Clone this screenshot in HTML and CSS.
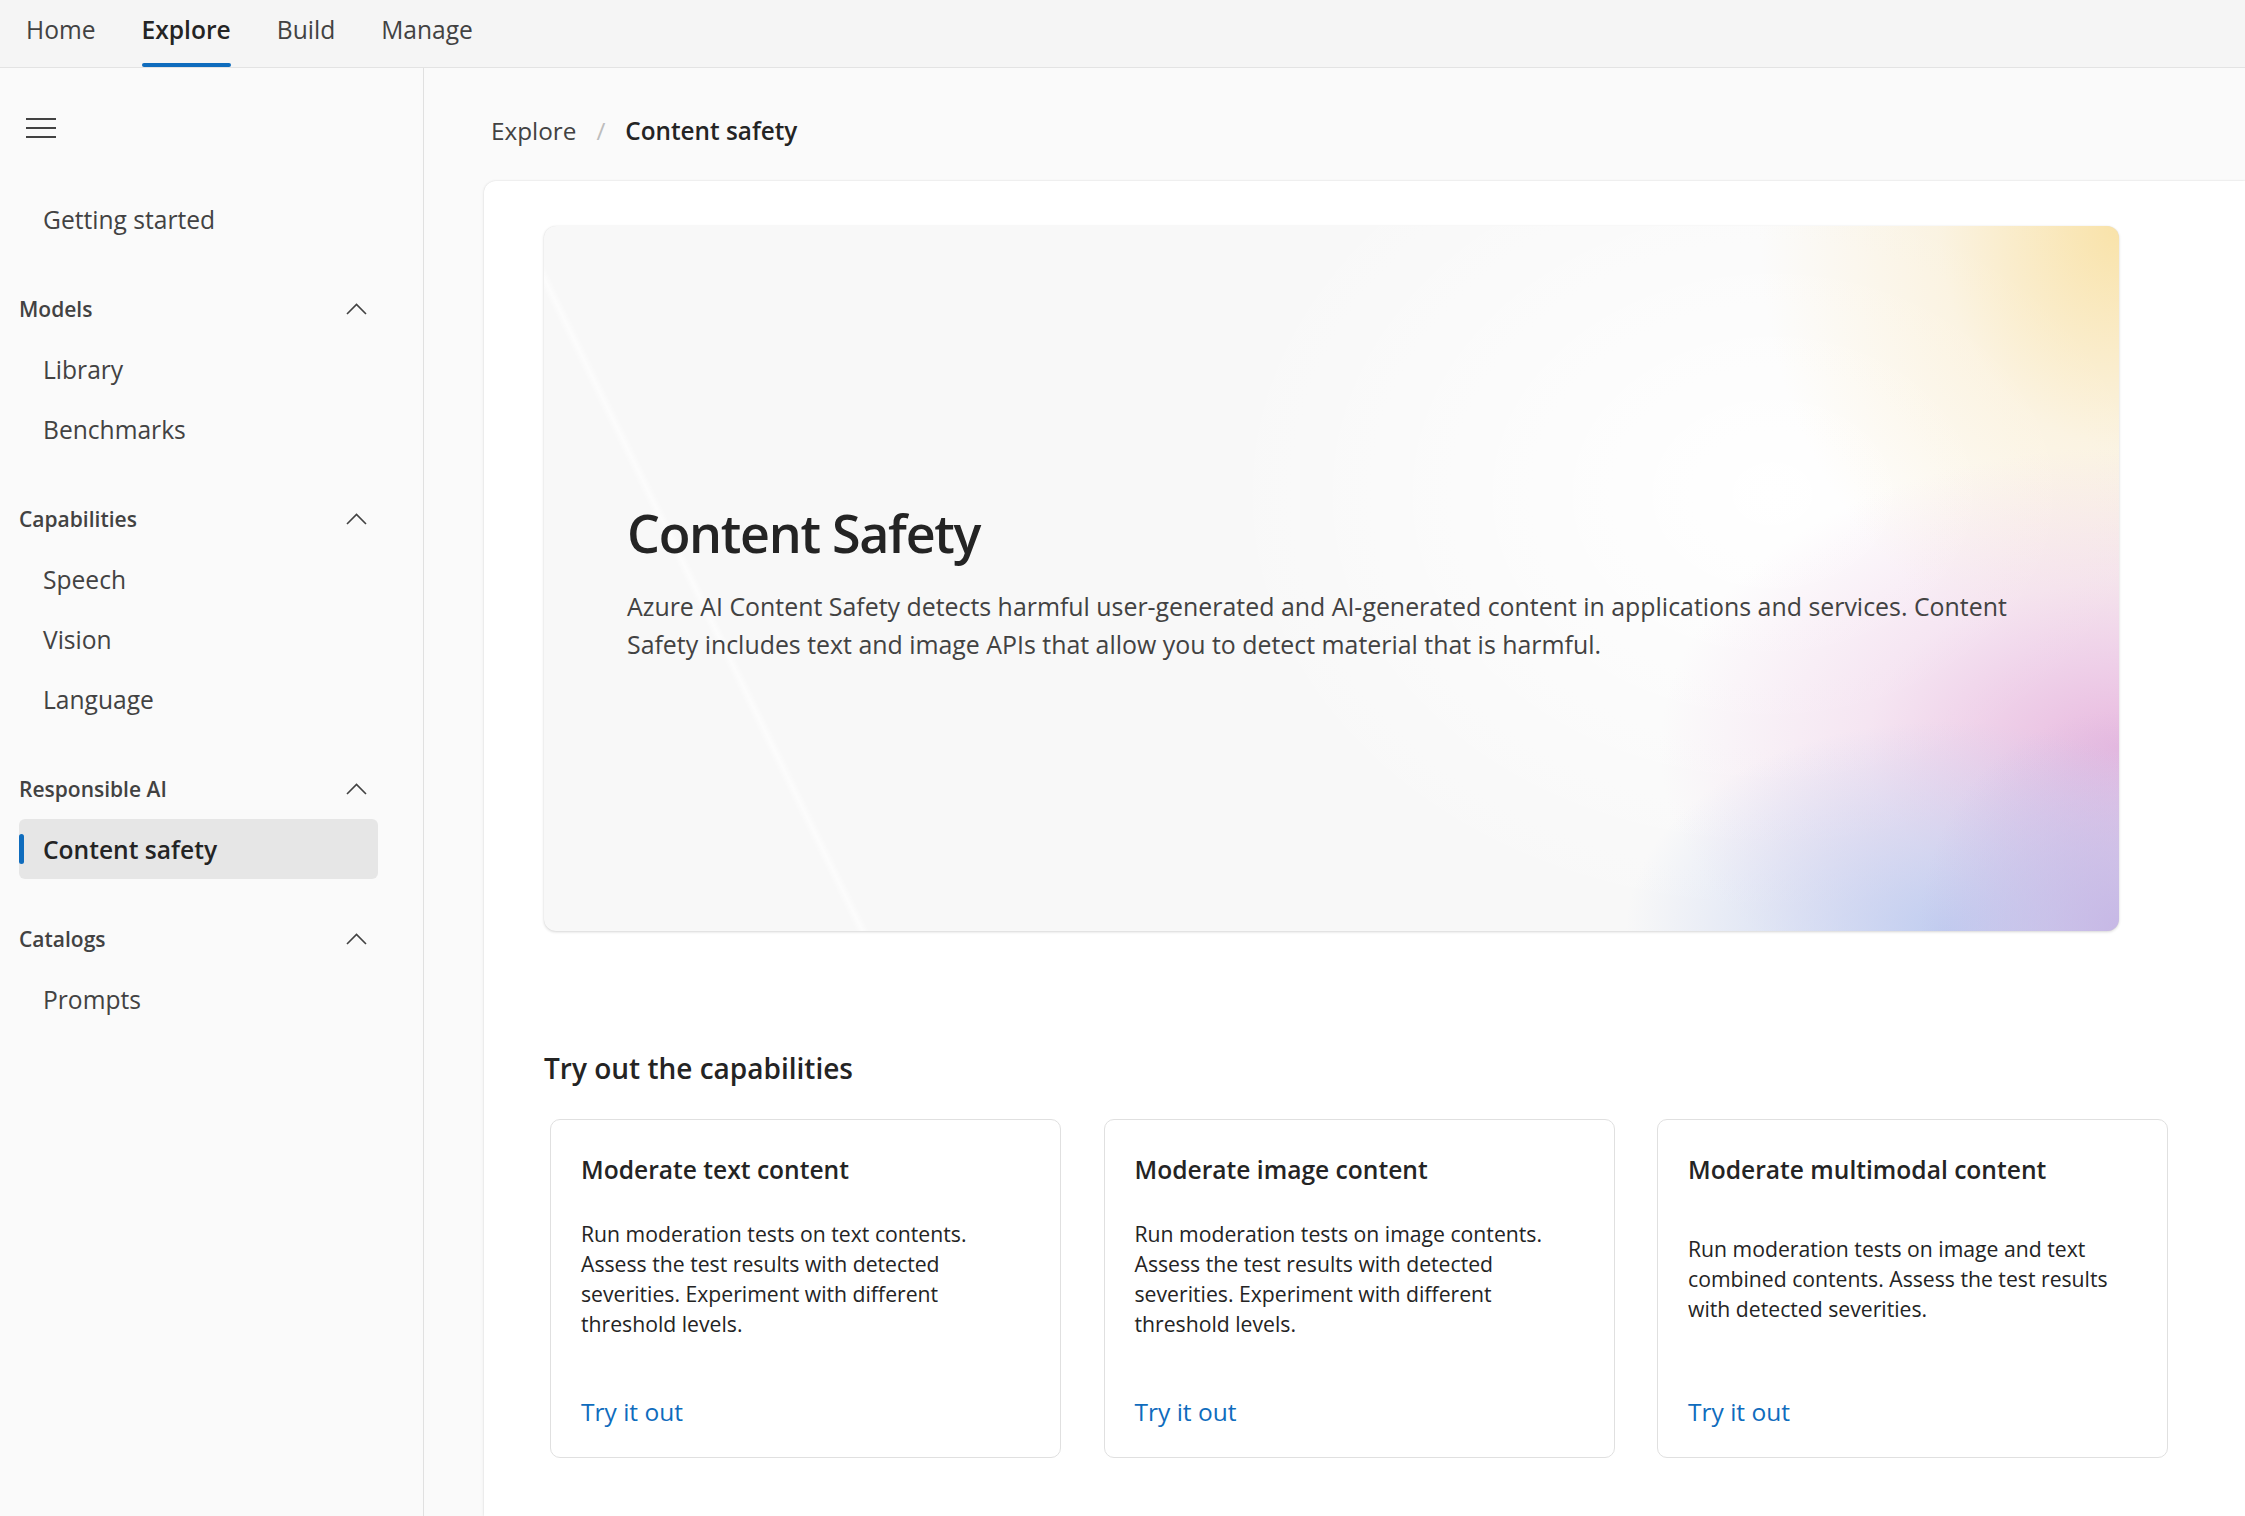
FILE: index.html
```html
<!DOCTYPE html>
<html lang="en">
<head>
<meta charset="utf-8">
<title>Content safety - Explore</title>
<link rel="stylesheet" href="styles.css">
</head>
<body>
<header class="topnav">
  <a class="tab" href="#">Home</a>
  <a class="tab active" href="#">Explore</a>
  <a class="tab" href="#">Build</a>
  <a class="tab" href="#">Manage</a>
</header>
<div class="layout">
  <aside class="sidebar">
    <button class="hamburger" aria-label="Menu">
      <svg width="30" height="20" viewBox="0 0 30 20"><path d="M0 1H30M0 10H30M0 19H30" stroke="#424242" stroke-width="2" fill="none"/></svg>
    </button>
    <div class="group">
      <a class="item" href="#">Getting started</a>
    </div>
    <div class="group">
      <div class="group-head"><span>Models</span><svg class="chev" width="21" height="12" viewBox="0 0 21 12"><path d="M1 11L10.5 1.5L20 11" stroke="#424242" stroke-width="1.6" fill="none"/></svg></div>
      <a class="item" href="#">Library</a>
      <a class="item" href="#">Benchmarks</a>
    </div>
    <div class="group">
      <div class="group-head"><span>Capabilities</span><svg class="chev" width="21" height="12" viewBox="0 0 21 12"><path d="M1 11L10.5 1.5L20 11" stroke="#424242" stroke-width="1.6" fill="none"/></svg></div>
      <a class="item" href="#">Speech</a>
      <a class="item" href="#">Vision</a>
      <a class="item" href="#">Language</a>
    </div>
    <div class="group">
      <div class="group-head"><span>Responsible AI</span><svg class="chev" width="21" height="12" viewBox="0 0 21 12"><path d="M1 11L10.5 1.5L20 11" stroke="#424242" stroke-width="1.6" fill="none"/></svg></div>
      <a class="item active" href="#">Content safety</a>
    </div>
    <div class="group">
      <div class="group-head"><span>Catalogs</span><svg class="chev" width="21" height="12" viewBox="0 0 21 12"><path d="M1 11L10.5 1.5L20 11" stroke="#424242" stroke-width="1.6" fill="none"/></svg></div>
      <a class="item" href="#">Prompts</a>
    </div>
  </aside>
  <main class="main">
    <nav class="breadcrumb">
      <span class="crumb">Explore</span>
      <span class="sep">/</span>
      <span class="crumb current">Content safety</span>
    </nav>
    <section class="panel">
      <div class="hero">
        <h1 class="hero-title">Content Safety</h1>
        <p class="hero-text">Azure AI Content Safety detects harmful user-generated and AI-generated content in applications and services. Content Safety includes text and image APIs that allow you to detect material that is harmful.</p>
      </div>
      <h2 class="section-title">Try out the capabilities</h2>
      <div class="cards">
        <div class="card">
          <h3 class="card-title">Moderate text content</h3>
          <div class="card-body"><p>Run moderation tests on text contents. Assess the test results with detected severities. Experiment with different threshold levels.</p></div>
          <a class="card-link" href="#">Try it out</a>
        </div>
        <div class="card">
          <h3 class="card-title">Moderate image content</h3>
          <div class="card-body"><p>Run moderation tests on image contents. Assess the test results with detected severities. Experiment with different threshold levels.</p></div>
          <a class="card-link" href="#">Try it out</a>
        </div>
        <div class="card">
          <h3 class="card-title">Moderate multimodal content</h3>
          <div class="card-body"><p>Run moderation tests on image and text combined contents. Assess the test results with detected severities.</p></div>
          <a class="card-link" href="#">Try it out</a>
        </div>
      </div>
    </section>
  </main>
</div>
</body>
</html>
```
FILE: styles.css
```css
html, body {
  margin: 0;
  height: 100%;
}
body {
  font-family: "Open Sans", "Noto Sans", "Liberation Sans", sans-serif;
  color: #242424;
  background: #fafafa;
  overflow: hidden;
}
a { text-decoration: none; color: inherit; }
h1, h2, h3, p { margin: 0; }

/* top navigation */
.topnav {
  height: 67px;
  border-bottom: 1px solid #e3e3e3;
  background: #f5f5f5;
  display: flex;
  gap: 46px;
  padding-left: 26px;
}
.tab {
  position: relative;
  display: flex;
  align-items: center;
  padding-bottom: 9px;
  font-size: 24.6px;
  color: #424242;
}
.tab.active {
  font-weight: 600;
  color: #242424;
}
.tab.active::after {
  content: "";
  position: absolute;
  left: 0;
  right: 0;
  bottom: 0;
  height: 4px;
  border-radius: 2px;
  background: #0f6cbd;
}

.layout {
  display: flex;
  height: calc(100% - 68px);
}

/* sidebar */
.sidebar {
  width: 359px;
  flex-shrink: 0;
  padding: 30px 45px 0 19px;
  background: #fafafa;
  border-right: 1px solid #e0e0e0;
}
.hamburger {
  height: 60px;
  margin-left: 7px;
  padding: 0;
  border: 0;
  background: none;
  display: flex;
  align-items: center;
}
.group {
  display: flex;
  flex-direction: column;
  margin-top: 30px;
}
.hamburger + .group { margin-top: 31px; }
.group-head {
  height: 60px;
  display: flex;
  align-items: center;
  justify-content: space-between;
  padding-right: 11px;
  font-size: 21px;
  font-weight: 600;
  color: #424242;
}
.chev { display: block; }
.item {
  position: relative;
  height: 60px;
  display: flex;
  align-items: center;
  padding-left: 24px;
  border-radius: 6px;
  font-size: 24.6px;
  color: #424242;
}
.item.active {
  background: #e6e6e6;
  font-weight: 600;
  color: #242424;
}
.item.active::before {
  content: "";
  position: absolute;
  left: 0;
  top: 15px;
  width: 5px;
  height: 30px;
  border-radius: 3px;
  background: #0f6cbd;
}

/* main */
.main {
  flex: 1;
  min-width: 0;
  display: flex;
  flex-direction: column;
  padding: 45px 0 0 60px;
}
.breadcrumb {
  margin-left: 7px;
  height: 34px;
  display: flex;
  align-items: center;
  font-size: 24.3px;
  color: #424242;
}
.sep {
  color: #bdbdbd;
  margin: 0 20px;
}
.crumb.current {
  font-weight: 600;
  color: #242424;
}
.panel {
  margin-top: 34px;
  flex: 1;
  background: #ffffff;
  border-top-left-radius: 12px;
  box-shadow: 0 0 2px rgba(0, 0, 0, 0.12), 0 1px 4px rgba(0, 0, 0, 0.06);
  padding: 45px 0 0 60px;
}

.hero {
  width: 1575px;
  height: 705px;
  box-sizing: border-box;
  padding: 6px 83px 0 83px;
  border-radius: 12px;
  display: flex;
  flex-direction: column;
  justify-content: center;
  box-shadow: 0 1px 3px rgba(0, 0, 0, 0.16), 0 0 1px rgba(0, 0, 0, 0.08);
  background:
    linear-gradient(64deg, rgba(255,255,255,0) 16.25%, rgba(255,255,255,0.6) 16.6%, rgba(255,255,255,0) 16.95%),
    radial-gradient(ellipse 200px 220px at 100% 100%, rgba(196,180,228,0.9), rgba(196,180,228,0) 100%),
    radial-gradient(ellipse 320px 210px at 89% 100%, rgba(190,204,240,0.95), rgba(190,204,240,0) 100%),
    radial-gradient(ellipse 460px 300px at 100% 74%, rgba(230,178,220,0.9), rgba(236,196,228,0.4) 55%, rgba(240,200,230,0) 100%),
    radial-gradient(ellipse 360px 440px at 100% 0%, rgba(249,224,160,0.9), rgba(251,234,196,0.45) 50%, rgba(255,250,235,0) 100%),
    radial-gradient(ellipse 560px 440px at 78% 38%, rgba(255,255,255,1), rgba(255,255,255,0) 100%),
    #f8f8f8;
}
.hero-title {
  font-size: 52px;
  line-height: 64px;
  font-weight: 600;
  letter-spacing: -1.3px;
  color: #242424;
}
.hero-text {
  margin-top: 22px;
  font-size: 24.9px;
  line-height: 38px;
  color: #424242;
}

.section-title {
  margin-top: 118px;
  font-size: 28px;
  line-height: 38px;
  font-weight: 600;
  color: #242424;
}
.cards {
  margin-top: 32px;
  margin-left: 6px;
  display: grid;
  grid-template-columns: repeat(3, 511px);
  column-gap: 42.5px;
}
.card {
  height: 339px;
  box-sizing: border-box;
  border: 1px solid #e0e0e0;
  border-radius: 10px;
  background: #ffffff;
  padding: 33px 48px 28px 30px;
  display: flex;
  flex-direction: column;
}
.card-title {
  font-size: 24.6px;
  line-height: 34px;
  font-weight: 600;
  color: #242424;
}
.card-body {
  flex: 1;
  display: flex;
  align-items: center;
  padding-bottom: 24px;
}
.card-body p {
  font-size: 21.2px;
  line-height: 30px;
  color: #242424;
}
.card-link {
  font-size: 24.5px;
  line-height: 34px;
  color: #0f6cbd;
}
```
